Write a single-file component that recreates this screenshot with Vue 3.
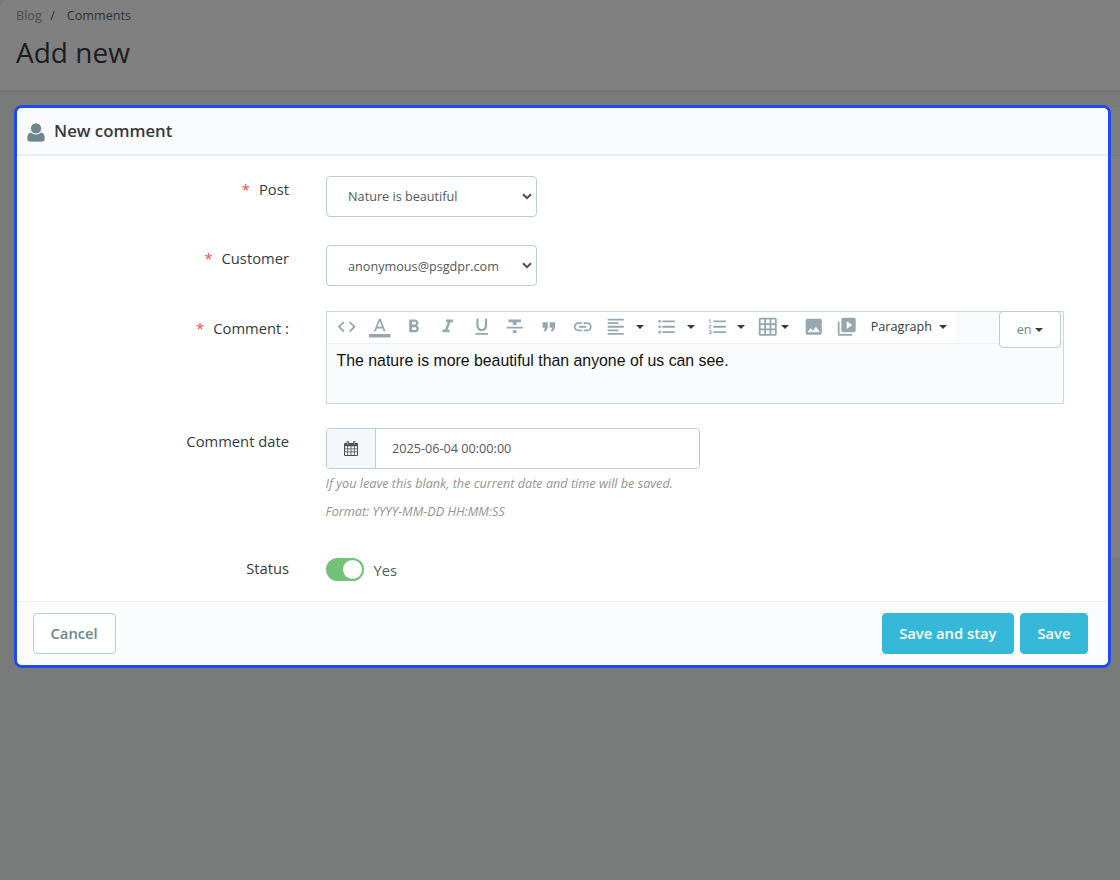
<template>
  <div class="page">
    <header class="page-head">
      <nav class="breadcrumb">
        <a>Blog</a>
        <span class="sep">/</span>
        <span class="current">Comments</span>
      </nav>
      <h1>Add new</h1>
    </header>

    <main class="sheet">
      <form class="panel" @submit.prevent>
        <div class="panel-heading">
          <svg class="user" viewBox="0 0 18 19">
            <path d="M4 9.200C1.200 9.600 0 12.200 0 15.600 0 17.700 1.200 18.900 3 18.900H15c1.800 0 3-1.200 3-3.300 0-3.400-1.200-6-4-6.400-1.300 1.300-3 2-5 2s-3.700-.7-5-2z" />
            <circle cx="9" cy="5.400" r="5.400" />
          </svg>
          <h3>New comment</h3>
        </div>

        <div class="panel-body">
          <div v-for="s in selects" :key="s.label" class="row select-row">
            <label><i>*</i>{{ s.label }}</label>
            <div class="select">
              <span>{{ s.value }}</span>
              <svg viewBox="0 0 10 7"><path d="M1 1.200l4 4 4-4" /></svg>
            </div>
          </div>

          <div class="row comment-row">
            <label><i>*</i>Comment :</label>
            <div class="editor">
              <div class="toolbar">
                <div class="tools">
                  <button v-for="t in tools" :key="t.name" type="button" :class="['tool', { menu: t.menu, tight: t.tight }]" :title="t.name">
                    <svg class="icon" viewBox="0 0 24 24"><path :d="t.d" /></svg>
                    <b v-if="t.menu" class="caret"></b>
                  </button>
                  <button type="button" class="format">Paragraph<b class="caret"></b></button>
                </div>
              </div>
              <div class="content" contenteditable spellcheck="false">The nature is more beautiful than anyone of us can see.</div>
              <button type="button" class="lang">en<b class="caret"></b></button>
            </div>
          </div>

          <div class="row date-row">
            <label>Comment date</label>
            <div>
              <div class="date">
                <span class="addon">
                  <svg viewBox="0 0 14 15">
                    <path fill-rule="evenodd" d="M1 2h1.600V1.200a1.200 1.200 0 0 1 2.400 0V2h4V1.200a1.200 1.200 0 0 1 2.400 0V2H13a1 1 0 0 1 1 1v11a1 1 0 0 1-1 1H1a1 1 0 0 1-1-1V3a1 1 0 0 1 1-1zM1 5.200v2.300h2.300V5.200zm3.100 0v2.300h2.500V5.200zm3.300 0v2.300h2.500V5.200zm3.300 0v2.300H13V5.200zM1 8.200v2.400h2.300V8.200zm3.100 0v2.400h2.500V8.200zm3.300 0v2.400h2.500V8.200zm3.300 0v2.400H13V8.200zM1 11.300V14h2.300v-2.700zm3.100 0V14h2.500v-2.700zm3.300 0V14h2.500v-2.700zm3.300 0V14H13v-2.700zM3.500 1v2.500h.6V1zm6.400 0v2.500h.6V1z" />
                  </svg>
                </span>
                <input v-model="date" />
              </div>
              <p class="help">If you leave this blank, the current date and time will be saved.</p>
              <p class="help">Format: YYYY-MM-DD HH:MM:SS</p>
            </div>
          </div>

          <div class="row status-row">
            <label>Status</label>
            <div class="status" @click="active = !active">
              <span :class="['switch', { on: active }]"></span>
              <span>{{ active ? 'Yes' : 'No' }}</span>
            </div>
          </div>
        </div>

        <div class="panel-footer">
          <button type="button" class="btn">Cancel</button>
          <div class="actions">
            <button type="submit" class="btn primary">Save and stay</button>
            <button type="submit" class="btn primary">Save</button>
          </div>
        </div>
      </form>
    </main>
  </div>
</template>

<script setup>
import { ref } from 'vue'

const date = ref('2025-06-04 00:00:00')
const active = ref(true)

const selects = [
  { label: 'Post', value: 'Nature is beautiful' },
  { label: 'Customer', value: 'anonymous@psgdpr.com' }
]

const tools = [
  { name: 'Source code', d: 'M9.400 16.600L4.800 12l4.600-4.600L8 6l-6 6 6 6 1.400-1.400zm5.200 0l4.600-4.600-4.600-4.600L16 6l6 6-6 6-1.400-1.400z' },
  { name: 'Text color', d: 'M0 20h24v4H0zM11 3L5.500 17h2.250l1.120-3h6.250l1.120 3h2.250L13 3h-2zm-1.380 9L12 5.670 14.380 12H9.620z' },
  { name: 'Bold', d: 'M15.600 10.790c.97-.67 1.650-1.770 1.650-2.790 0-2.260-1.750-4-4-4H7v14h7.040c2.090 0 3.710-1.700 3.710-3.790 0-1.520-.86-2.820-2.150-3.420zM10 6.500h3c.83 0 1.500.67 1.500 1.500s-.67 1.500-1.500 1.500h-3v-3zm3.500 9H10v-3h3.500c.83 0 1.500.67 1.500 1.500s-.67 1.500-1.500 1.500z' },
  { name: 'Italic', d: 'M10 4v3h2.210l-3.420 8H6v3h8v-3h-2.210l3.420-8H18V4z' },
  { name: 'Underline', d: 'M12 17c3.310 0 6-2.690 6-6V3h-2.500v8c0 1.930-1.570 3.500-3.500 3.500S8.500 12.930 8.500 11V3H6v8c0 3.310 2.690 6 6 6zm-7 2v2h14v-2H5z' },
  { name: 'Strikethrough', d: 'M10 19h4v-3h-4v3zM5 4v3h5v3h4V7h5V4H5zM3 14h18v-2H3v2z' },
  { name: 'Blockquote', d: 'M6 17h3l2-4V7H5v6h3zm8 0h3l2-4V7h-6v6h3z' },
  { name: 'Link', d: 'M3.900 12c0-1.710 1.390-3.100 3.100-3.100h4V7H7c-2.760 0-5 2.240-5 5s2.240 5 5 5h4v-1.900H7c-1.710 0-3.100-1.390-3.100-3.100zM8 13h8v-2H8v2zm9-6h-4v1.900h4c1.710 0 3.100 1.390 3.100 3.100s-1.390 3.100-3.100 3.100h-4V17h4c2.760 0 5-2.240 5-5s-2.240-5-5-5z' },
  { name: 'Align', menu: true, d: 'M15 15H3v2h12v-2zm0-8H3v2h12V7zM3 13h18v-2H3v2zm0 8h18v-2H3v2zM3 3v2h18V3H3z' },
  { name: 'Bullet list', menu: true, d: 'M4 10.500c-.83 0-1.500.67-1.500 1.500s.67 1.500 1.500 1.500 1.500-.67 1.500-1.500-.67-1.500-1.500-1.500zm0-6c-.83 0-1.500.67-1.500 1.500S3.170 7.500 4 7.500 5.500 6.830 5.500 6 4.830 4.500 4 4.500zm0 12c-.83 0-1.500.68-1.500 1.500s.68 1.500 1.500 1.500 1.500-.68 1.500-1.500-.67-1.500-1.500-1.500zM7 19h14v-2H7v2zm0-6h14v-2H7v2zm0-8v2h14V5H7z' },
  { name: 'Numbered list', menu: true, d: 'M2 17h2v.5H3v1h1v.5H2v1h3v-4H2v1zm1-9h1V4H2v1h1v3zm-1 3h1.800L2 13.100v.9h3v-1H3.200L5 10.900V10H2v1zm5-6v2h14V5H7zm0 14h14v-2H7v2zm0-6h14v-2H7v2z' },
  { name: 'Table', menu: true, tight: true, d: 'M20 2H4c-1.100 0-2 .9-2 2v16c0 1.100.9 2 2 2h16c1.100 0 2-.9 2-2V4c0-1.100-.9-2-2-2zM8 20H4v-4h4v4zm0-6H4v-4h4v4zm0-6H4V4h4v4zm6 12h-4v-4h4v4zm0-6h-4v-4h4v4zm0-6h-4V4h4v4zm6 12h-4v-4h4v4zm0-6h-4v-4h4v4zm0-6h-4V4h4v4z' },
  { name: 'Image', d: 'M21 19V5c0-1.100-.9-2-2-2H5c-1.100 0-2 .9-2 2v14c0 1.100.9 2 2 2h14c1.100 0 2-.9 2-2zM8.500 13.500l2.500 3.010L14.500 12l4.500 6H5l3.500-4.500z' },
  { name: 'Video', d: 'M4 6H2v14c0 1.100.9 2 2 2h14v-2H4V6zm16-4H8c-1.100 0-2 .9-2 2v12c0 1.100.9 2 2 2h12c1.100 0 2-.9 2-2V4c0-1.100-.9-2-2-2zm-8 12.500v-9l6 4.500-6 4.500z' }
]
</script>

<style>
body {
  margin: 0;
  background: #797b7a;
}
</style>

<style scoped>
* {
  box-sizing: border-box;
}
.page {
  height: 880px;
  overflow: hidden;
  font-family: "Open Sans", "Noto Sans", sans-serif;
  color: #363a41;
}
.page-head {
  height: 92px;
  padding: 7px 16px 0;
  background: #808080;
  border-bottom: 2px solid #727575;
  border-top-left-radius: 8px;
}
.breadcrumb {
  display: flex;
  font-size: 12.600px;
  line-height: 18px;
  color: #303236;
}
.breadcrumb a {
  color: #4c4d4f;
}
.sep {
  margin: 0 12px 0 8.500px;
}
h1 {
  margin: 7px 0 0;
  font-size: 28px;
  line-height: 40px;
  font-weight: 400;
  color: #1c1d21;
}
.sheet {
  height: 451px;
  margin: 15px 0 0 16px;
  background: linear-gradient(#7d7f7f 48px, #757777 48px, #757777 49px, #808080 49px);
}
.panel {
  position: relative;
  top: -2px;
  left: -2px;
  width: 1097px;
  height: 563px;
  border: 3px solid #2149f3;
  border-radius: 8px;
  background: #fff;
  display: flex;
  flex-direction: column;
  overflow: hidden;
}
.panel-heading {
  height: 48px;
  padding-left: 10px;
  display: flex;
  align-items: center;
  background: #fafbfe;
  border-bottom: 2px solid #eaeeef;
}
.user {
  width: 18px;
  height: 19px;
  margin: 2px 9px 0 0;
  fill: #6c868e;
  stroke: #fafbfe;
  stroke-width: 0.6;
}
h3 {
  margin: 0;
  font-size: 16.800px;
  line-height: 24px;
  font-weight: 600;
}
.panel-body {
  flex: 1;
}
.row {
  display: flex;
}
.row > label {
  width: 272px;
  margin-right: 36.600px;
  padding-top: 3px;
  text-align: right;
  font-size: 14.760px;
  line-height: 21px;
}
label i {
  margin-right: 9px;
  font-style: normal;
  color: #f54c3e;
}
.select-row {
  height: 69.500px;
}
.select-row:first-child {
  margin-top: 19.500px;
}
.select {
  width: 211px;
  height: 41px;
  padding: 0 4px 0 21.500px;
  display: flex;
  align-items: center;
  justify-content: space-between;
  border: 1px solid #bbcdd2;
  border-radius: 4px;
  font-size: 12.650px;
  color: #54585c;
}
.select svg {
  width: 10px;
  height: 7px;
  fill: none;
  stroke: #4b4e52;
  stroke-width: 2;
}
.comment-row {
  height: 113px;
}
.editor {
  position: relative;
  width: 738px;
  height: 93px;
  margin-top: -4px;
  border: 1px solid #c8d8dc;
  background: #fafbfd;
}
.toolbar {
  height: 32px;
  border-bottom: 1px solid #edf0f2;
}
.tools {
  width: 628px;
  height: 31px;
  padding-left: 3px;
  display: flex;
  align-items: center;
  background: #fff;
}
button {
  font-family: inherit;
  padding: 0;
  border: 0;
  background: none;
}
.tool {
  flex: none;
  width: 33.740px;
  height: 31px;
  padding-left: 6px;
  display: flex;
  align-items: center;
}
.tool.menu {
  width: 50.600px;
}
.tool.tight {
  width: 45.500px;
}
.icon {
  flex: none;
  width: 21.500px;
  height: 21.500px;
  fill: #95a8af;
}
.caret {
  display: inline-block;
  border: 4.500px solid transparent;
  border-top-color: #363a41;
  border-bottom: 0;
}
.tool .caret {
  margin-left: 9px;
}
.tool.tight .caret {
  margin-left: 2.500px;
}
.format {
  display: flex;
  align-items: center;
  margin: -2px 0 0 6.500px;
  font-size: 12.650px;
  color: #363a41;
}
.format .caret {
  margin: 1px 0 0 7px;
}
.content {
  padding: 7px 10px;
  outline: 0;
  font-family: "Liberation Sans", Arial, sans-serif;
  font-size: 15.850px;
  line-height: 19px;
  color: #111;
}
.lang {
  position: absolute;
  top: -1px;
  right: 2px;
  width: 62px;
  height: 37px;
  display: flex;
  align-items: center;
  justify-content: center;
  border: 1px solid #bbcdd2;
  border-radius: 4px;
  background: #fff;
  font-size: 12.650px;
  color: #6c868e;
}
.lang .caret {
  margin: 2px 0 0 3px;
}
.date-row {
  height: 127.500px;
}
.date {
  display: flex;
  width: 374px;
  height: 41px;
  border: 1px solid #bbcdd2;
  border-radius: 4px;
  overflow: hidden;
}
.addon {
  width: 49px;
  display: flex;
  align-items: center;
  justify-content: center;
  background: #f5f8fa;
  border-right: 1px solid #bbcdd2;
}
.addon svg {
  width: 14px;
  height: 15px;
  fill: #4c4f52;
}
input {
  flex: 1;
  min-width: 0;
  padding: 0 16.500px;
  border: 0;
  outline: 0;
  font: 12.650px "Open Sans", sans-serif;
  color: #54585c;
}
.help {
  margin: 6px 0 0;
  font-size: 12.650px;
  line-height: 17px;
  font-style: italic;
  color: #939495;
}
.help + .help {
  margin-top: 11.500px;
}
.status {
  display: flex;
  align-items: center;
  gap: 10px;
  height: 29px;
  font-size: 14.760px;
  line-height: 20px;
  color: #54585c;
}
.switch {
  width: 38px;
  height: 23px;
  padding: 2px;
  border-radius: 12px;
  background: #b3c7cd;
}
.switch::after {
  content: "";
  display: block;
  width: 19px;
  height: 19px;
  border-radius: 50%;
  background: #fff;
}
.switch.on {
  background: #72c279;
}
.switch.on::after {
  margin-left: auto;
}
.panel-footer {
  height: 64px;
  padding: 11px 20px 0 15.500px;
  display: flex;
  justify-content: space-between;
  background: #fafcfe;
  border-top: 1px solid #eceff0;
}
.actions {
  display: flex;
  gap: 6px;
}
.btn {
  height: 41px;
  padding: 0 17px 1px;
  border: 1px solid #bbcdd2;
  border-radius: 4px;
  background: #fff;
  font-size: 14.760px;
  font-weight: 600;
  color: #6c868e;
}
.btn.primary {
  padding: 0 16.500px 1px;
  border-color: #36b8d8;
  background: #36b8d8;
  color: #fff;
}
</style>
